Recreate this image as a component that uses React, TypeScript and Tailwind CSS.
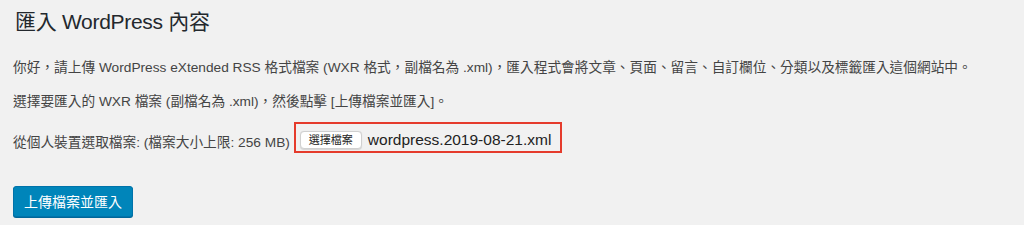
import React from "react";

export default function App() {
  const font = {
    fontFamily:
      '"Liberation Sans", "Noto Sans CJK TC", "Noto Sans CJK SC", sans-serif',
  };
  return (
    <div
      className="w-[1024px] h-[225px] bg-[#f1f1f1] overflow-hidden pl-[13px]"
      style={font}
    >
      <h1 className="pt-[7px] pl-[2px] text-[21px] tracking-[-0.3px] leading-[30px] text-[#23282d] font-normal">
        匯入 WordPress 內容
      </h1>
      <p className="mt-[21px] text-[13.7px] leading-[20px] text-[#444]">
        你好，請上傳 WordPress eXtended RSS 格式檔案 (WXR 格式，副檔名為 .xml)，匯入程式會將文章、頁面、留言、自訂欄位、分類以及標籤匯入這個網站中。
      </p>
      <p className="mt-[14px] text-[13.7px] leading-[20px] text-[#444]">
        選擇要匯入的 WXR 檔案 (副檔名為 .xml)，然後點擊 [上傳檔案並匯入]。
      </p>
      <div className="mt-[10px] flex items-end">
        <span className="text-[13.7px] leading-[20px] text-[#444]">
          從個人裝置選取檔案: (檔案大小上限: 256 MB)
        </span>
        <div className="ml-[4px] flex items-center border-2 border-[#e53b2c] pt-[6px] pb-[1px] pl-[4px] pr-[9px]">
          <span className="h-[18px] w-[62px] flex items-center justify-center bg-white border border-[#d0d0d0] rounded-[4px] text-[11px] leading-none text-[#222] shadow-[0_0.5px_1px_rgba(0,0,0,0.12)]">
            選擇檔案
          </span>
          <span className="ml-[6px] text-[15.5px] leading-[20px] text-[#222]">
            wordpress.2019-08-21.xml
          </span>
        </div>
      </div>
      <div className="mt-[33px]">
        <button className="h-[31px] px-[10px] bg-[#0085ba] border border-[#0073aa] rounded-[3px] text-white text-[14px] leading-none shadow-[0_1px_0_#006799]">
          上傳檔案並匯入
        </button>
      </div>
    </div>
  );
}
